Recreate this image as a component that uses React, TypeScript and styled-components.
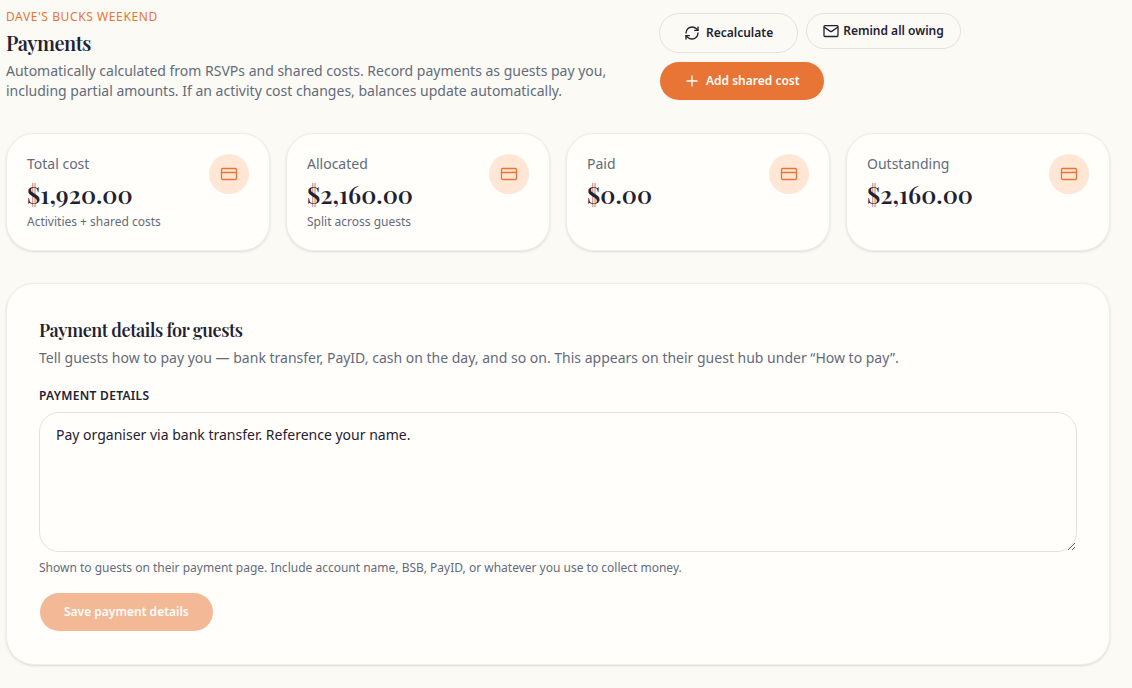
import React, { useState } from "react";
import styled, { createGlobalStyle, css } from "styled-components";
import { RefreshCw } from "lucide-react";

const color = {
  page: "#fbfaf5",
  card: "#fffefa",
  ink: "#1f2233",
  muted: "#646b7a",
  line: "#e3e2dc",
  cardLine: "#eeede8",
  accent: "#e87435",
  accentSoft: "#ffe6d5",
};

const serif = `"Playfair Display", "Liberation Serif", serif`;

const GlobalStyle = createGlobalStyle`
  *, *::before, *::after { box-sizing: border-box; }
  body {
    margin: 0;
    background: ${color.page};
    color: ${color.ink};
    font-family: "Noto Sans", sans-serif;
    font-size: 14px;
    line-height: 20px;
  }
  h1, h2, p { margin: 0; }
`;

const Page = styled.main`
  display: flex;
  flex-direction: column;
  gap: 32px;
  padding: 8px 22px 22px 6px;
`;

const Header = styled.header`
  display: grid;
  grid-template-columns: minmax(0, 1fr) minmax(0, 451px);
  column-gap: 16px;
`;

const Eyebrow = styled.p`
  color: ${color.accent};
  font-size: 12px;
  line-height: 18px;
  letter-spacing: 0.6px;
  text-transform: uppercase;
`;

const PageTitle = styled.h1`
  margin-top: 3px;
  font-family: ${serif};
  font-size: 20px;
  font-weight: 600;
  line-height: 28px;
  letter-spacing: -0.025em;
`;

const Muted = styled.p`
  margin-top: 4px;
  color: ${color.muted};
`;

const Actions = styled.div`
  display: flex;
  flex-wrap: wrap;
  align-items: flex-start;
  align-content: flex-start;
  gap: 8px;
  padding-top: 5px;
`;

const Button = styled.button<{ $primary?: boolean; $compact?: boolean }>`
  display: inline-flex;
  align-items: center;
  justify-content: center;
  gap: ${(p) => (p.$compact ? 4 : 6)}px;
  height: ${(p) => (p.$compact ? 36 : 40)}px;
  padding: 0 ${(p) => (p.$compact ? 16 : 24)}px;
  border: 1px solid ${color.line};
  border-radius: 20px;
  background: transparent;
  color: ${color.ink};
  font: 600 12px/20px "Noto Sans", sans-serif;
  white-space: nowrap;
  cursor: pointer;

  ${(p) =>
    p.$primary &&
    css`
      border-color: transparent;
      background: ${color.accent};
      background-clip: padding-box;
      color: ${color.card};
    `}

  &:disabled {
    opacity: 0.5;
    cursor: default;
  }
`;

const Stats = styled.section`
  display: grid;
  grid-template-columns: repeat(4, minmax(0, 1fr));
  gap: 16px;
`;

const card = css`
  border: 1px solid ${color.cardLine};
  border-radius: 28px;
  background: ${color.card};
  box-shadow:
    0 1px 3px rgba(31, 34, 51, 0.1),
    0 1px 2px -1px rgba(31, 34, 51, 0.1);
`;

const StatCard = styled.article`
  ${card}
  display: flex;
  align-items: flex-start;
  justify-content: space-between;
  min-height: 118px;
  padding: 20px;
`;

const StatLabel = styled.p`
  color: ${color.muted};
`;

const StatValue = styled.p`
  margin-top: 4px;
  font-family: ${serif};
  font-size: 24px;
  font-weight: 600;
  line-height: 32px;
`;

const Small = styled.p`
  margin-top: 4px;
  color: ${color.muted};
  font-size: 12px;
  line-height: 16px;
`;

const StatIcon = styled.span`
  display: grid;
  place-items: center;
  flex: none;
  width: 40px;
  height: 40px;
  border-radius: 50%;
  background: ${color.accentSoft};
  color: ${color.accent};
`;

const Panel = styled.form`
  ${card}
  display: flex;
  flex-direction: column;
  align-items: flex-start;
  padding: 32px;
`;

const PanelTitle = styled.h2`
  font-family: ${serif};
  font-size: 18px;
  font-weight: 600;
  line-height: 28px;
  letter-spacing: -0.025em;
`;

const FieldLabel = styled.label`
  margin-top: 20px;
  font-size: 12px;
  font-weight: 600;
  line-height: 16px;
  letter-spacing: 0.3px;
  text-transform: uppercase;
`;

const TextArea = styled.textarea`
  width: 100%;
  height: 140px;
  margin: 8px 0 4px;
  padding: 12px 16px;
  border: 1px solid ${color.line};
  border-radius: 20px;
  background: ${color.card};
  color: ${color.ink};
  font: 14px/20px "Noto Sans", sans-serif;
  resize: vertical;
`;

const SaveRow = styled.div`
  margin-top: 16px;
`;

const LineIcon = styled.svg`
  flex: none;
  fill: none;
  stroke: currentColor;
  stroke-width: 1.3;
  stroke-linecap: round;
  stroke-linejoin: round;
`;

const MailIcon = () => (
  <LineIcon width="16" height="16" viewBox="0 0 16 16" aria-hidden="true">
    <rect x="1" y="2.6" width="14" height="10.9" rx="1" />
    <path d="M1.4 4.2 7.3 8.4a1.2 1.2 0 0 0 1.4 0l5.9-4.2" />
  </LineIcon>
);

const PlusIcon = () => (
  <LineIcon width="16" height="16" viewBox="0 0 16 16" aria-hidden="true">
    <path d="M8 2.9v10.2M2.9 8h10.2" />
  </LineIcon>
);

const CardIcon = () => (
  <LineIcon width="20" height="20" viewBox="0 0 20 20" aria-hidden="true">
    <rect x="2.5" y="4.5" width="15" height="11" rx="1.3" />
    <path d="M2.5 8.5h15" />
  </LineIcon>
);

const stats = [
  { label: "Total cost", value: "$1,920.00", note: "Activities + shared costs" },
  { label: "Allocated", value: "$2,160.00", note: "Split across guests" },
  { label: "Paid", value: "$0.00" },
  { label: "Outstanding", value: "$2,160.00" },
];

const savedDetails = "Pay organiser via bank transfer. Reference your name.";

export default function App() {
  const [details, setDetails] = useState(savedDetails);

  return (
    <>
      <GlobalStyle />
      <Page>
        <Header>
          <div>
            <Eyebrow>Dave's Bucks Weekend</Eyebrow>
            <PageTitle>Payments</PageTitle>
            <Muted>
              Automatically calculated from RSVPs and shared costs. Record payments as guests pay
              you, including partial amounts. If an activity cost changes, balances update
              automatically.
            </Muted>
          </div>
          <Actions>
            <Button type="button">
              <RefreshCw size={16} />
              Recalculate
            </Button>
            <Button type="button" $compact>
              <MailIcon />
              Remind all owing
            </Button>
            <Button type="button" $primary>
              <PlusIcon />
              Add shared cost
            </Button>
          </Actions>
        </Header>

        <Stats>
          {stats.map((s) => (
            <StatCard key={s.label}>
              <div>
                <StatLabel>{s.label}</StatLabel>
                <StatValue>{s.value}</StatValue>
                {s.note && <Small>{s.note}</Small>}
              </div>
              <StatIcon>
                <CardIcon />
              </StatIcon>
            </StatCard>
          ))}
        </Stats>

        <Panel onSubmit={(e) => e.preventDefault()}>
          <PanelTitle>Payment details for guests</PanelTitle>
          <Muted>
            Tell guests how to pay you — bank transfer, PayID, cash on the day, and so on. This
            appears on their guest hub under “How to pay”.
          </Muted>
          <FieldLabel htmlFor="details">Payment details</FieldLabel>
          <TextArea id="details" value={details} onChange={(e) => setDetails(e.target.value)} />
          <Small>
            Shown to guests on their payment page. Include account name, BSB, PayID, or whatever you
            use to collect money.
          </Small>
          <SaveRow>
            <Button type="submit" $primary disabled={details === savedDetails}>
              Save payment details
            </Button>
          </SaveRow>
        </Panel>
      </Page>
    </>
  );
}
